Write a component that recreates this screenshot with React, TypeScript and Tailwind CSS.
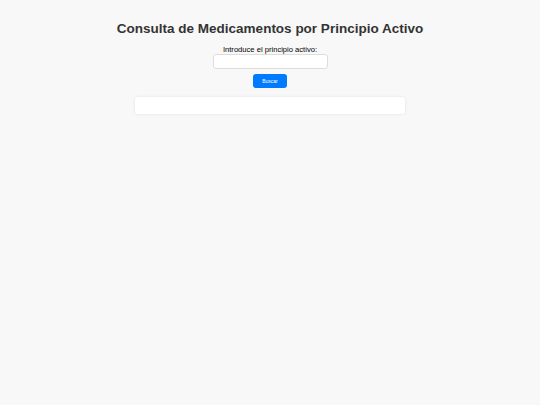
import React from 'react';

export default function App() {
  return (
    <div className="min-h-[405px] w-full bg-[#f8f8f8] text-[#333] pt-[20px] flex flex-col items-center" style={{ fontFamily: '"Liberation Sans", Arial, sans-serif' }}>
      <h1 className="text-[13.5px] font-bold leading-[17px] text-[#333]">Consulta de Medicamentos por Principio Activo</h1>
      <label className="mt-[8px] text-[7.6px] leading-[9px] text-black">Introduce el principio activo:</label>
      <input type="text" className="mt-0 w-[115px] h-[15px] bg-white border border-[#ddd] rounded-[3px] outline-none" />
      <button className="mt-[5px] w-[34px] h-[14px] bg-[#007bff] text-white text-[5px] rounded-[3px] leading-none">Buscar</button>
      <div className="mt-[9px] w-[270px] h-[17px] bg-white rounded-[3px] shadow-[0_0_3px_rgba(0,0,0,0.1)]"></div>
    </div>
  );
}
